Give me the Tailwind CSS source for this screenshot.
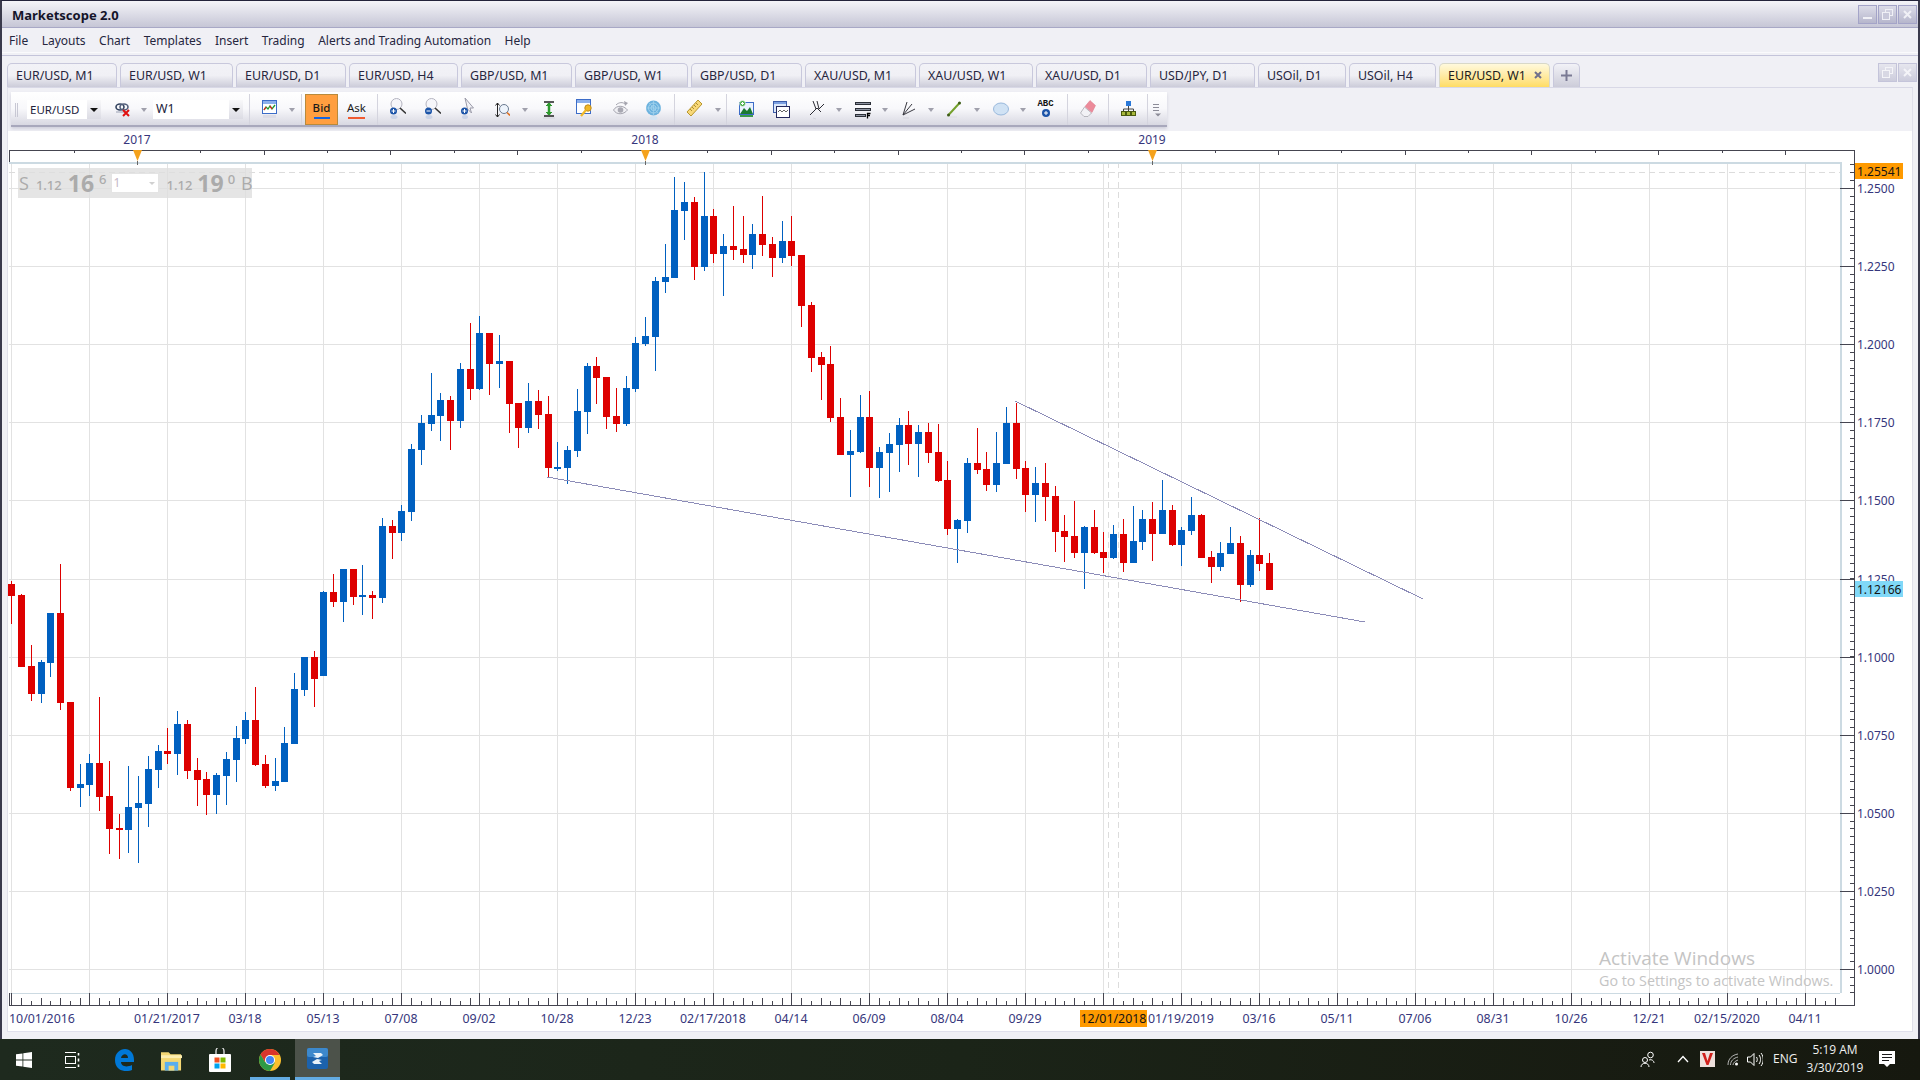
<!DOCTYPE html>
<html lang="en">
<head>
    <meta charset="UTF-8">
    <title>Marketscope 2.0</title>
    <script src="https://cdn.jsdelivr.net/npm/@tailwindcss/browser@4"></script>
</head>
<body class="w-[1920px] h-[1080px] overflow-hidden bg-[#1a2118] font-['Noto_Sans',sans-serif] text-[12px] text-[#22223c]">

    <!-- Application window -->
    <div class="h-[1039px] flex flex-col bg-[#f0f0f5] border-t border-[#23233a] border-l-2 border-l-[#3a3a4c] border-r-2 border-r-[#3a3a4c]">

        <!-- Title bar -->
        <div class="h-[27px] shrink-0 flex items-start bg-gradient-to-b from-[#f4f4f8] to-[#c6c6d6] border-b border-[#a8a8c6]">
            <span class="ml-[10px] mt-[5px] text-[13px] leading-[18px] font-bold text-[#14142a]">Marketscope 2.0</span>
            <div class="ml-auto mt-[4px] mr-[1px] flex gap-[1px]">
                <span class="w-[19px] h-[19px] flex items-end justify-center pb-[4px] bg-gradient-to-b from-[#dcdce8] to-[#b6b6cc] border border-[#a4a4c8]"><span class="w-[9px] h-[2px] bg-[#f0f0f6]"></span></span>
                <span class="w-[19px] h-[19px] flex items-center justify-center bg-gradient-to-b from-[#dcdce8] to-[#b6b6cc] border border-[#a4a4c8]">
                    <svg class="w-[11px] h-[11px]" viewBox="0 0 11 11" fill="none" stroke="#f0f0f6"><rect x="3.5" y="0.5" width="7" height="6"/><rect x="0.5" y="3.5" width="7" height="7" fill="#c8c8da"/></svg>
                </span>
                <span class="w-[19px] h-[19px] flex items-center justify-center bg-gradient-to-b from-[#dcdce8] to-[#b6b6cc] border border-[#a4a4c8]">
                    <svg class="w-[9px] h-[9px]" viewBox="0 0 9 9" stroke="#f0f0f6" stroke-width="2"><path d="M1 1l7 7M8 1l-7 7"/></svg>
                </span>
            </div>
        </div>

        <!-- Menu bar -->
        <div class="h-[25px] shrink-0 flex items-center pl-[7px] pt-[2px] gap-[13.5px] text-[12px] text-[#26263e] bg-[#f0f0f5] border-b border-[#fafafc]">
            <span>File</span>
            <span>Layouts</span>
            <span>Chart</span>
            <span>Templates</span>
            <span>Insert</span>
            <span>Trading</span>
            <span>Alerts and Trading Automation</span>
            <span>Help</span>
        </div>
        <div class="h-[3px] shrink-0 border-b border-[#c4c4da]"></div>

        <!-- Chart tabs -->
        <div class="h-[31px] shrink-0 flex items-end pl-[5px] gap-[3px] text-[12.4px] text-[#26263e]">
            <span class="w-[110px] h-[24px] pl-[8px] leading-[24px] rounded-t-[5px] border border-b-0 border-[#c8c8dc] bg-gradient-to-b from-[#f2f2f7] via-[#f0f0f5] to-[#ccccd9]">EUR/USD, M1</span>
            <span class="w-[113px] h-[24px] pl-[8px] leading-[24px] rounded-t-[5px] border border-b-0 border-[#c8c8dc] bg-gradient-to-b from-[#f2f2f7] via-[#f0f0f5] to-[#ccccd9]">EUR/USD, W1</span>
            <span class="w-[110px] h-[24px] pl-[8px] leading-[24px] rounded-t-[5px] border border-b-0 border-[#c8c8dc] bg-gradient-to-b from-[#f2f2f7] via-[#f0f0f5] to-[#ccccd9]">EUR/USD, D1</span>
            <span class="w-[109px] h-[24px] pl-[8px] leading-[24px] rounded-t-[5px] border border-b-0 border-[#c8c8dc] bg-gradient-to-b from-[#f2f2f7] via-[#f0f0f5] to-[#ccccd9]">EUR/USD, H4</span>
            <span class="w-[111px] h-[24px] pl-[8px] leading-[24px] rounded-t-[5px] border border-b-0 border-[#c8c8dc] bg-gradient-to-b from-[#f2f2f7] via-[#f0f0f5] to-[#ccccd9]">GBP/USD, M1</span>
            <span class="w-[113px] h-[24px] pl-[8px] leading-[24px] rounded-t-[5px] border border-b-0 border-[#c8c8dc] bg-gradient-to-b from-[#f2f2f7] via-[#f0f0f5] to-[#ccccd9]">GBP/USD, W1</span>
            <span class="w-[111px] h-[24px] pl-[8px] leading-[24px] rounded-t-[5px] border border-b-0 border-[#c8c8dc] bg-gradient-to-b from-[#f2f2f7] via-[#f0f0f5] to-[#ccccd9]">GBP/USD, D1</span>
            <span class="w-[111px] h-[24px] pl-[8px] leading-[24px] rounded-t-[5px] border border-b-0 border-[#c8c8dc] bg-gradient-to-b from-[#f2f2f7] via-[#f0f0f5] to-[#ccccd9]">XAU/USD, M1</span>
            <span class="w-[114px] h-[24px] pl-[8px] leading-[24px] rounded-t-[5px] border border-b-0 border-[#c8c8dc] bg-gradient-to-b from-[#f2f2f7] via-[#f0f0f5] to-[#ccccd9]">XAU/USD, W1</span>
            <span class="w-[111px] h-[24px] pl-[8px] leading-[24px] rounded-t-[5px] border border-b-0 border-[#c8c8dc] bg-gradient-to-b from-[#f2f2f7] via-[#f0f0f5] to-[#ccccd9]">XAU/USD, D1</span>
            <span class="w-[105px] h-[24px] pl-[8px] leading-[24px] rounded-t-[5px] border border-b-0 border-[#c8c8dc] bg-gradient-to-b from-[#f2f2f7] via-[#f0f0f5] to-[#ccccd9]">USD/JPY, D1</span>
            <span class="w-[88px] h-[24px] pl-[8px] leading-[24px] rounded-t-[5px] border border-b-0 border-[#c8c8dc] bg-gradient-to-b from-[#f2f2f7] via-[#f0f0f5] to-[#ccccd9]">USOil, D1</span>
            <span class="w-[87px] h-[24px] pl-[8px] leading-[24px] rounded-t-[5px] border border-b-0 border-[#c8c8dc] bg-gradient-to-b from-[#f2f2f7] via-[#f0f0f5] to-[#ccccd9]">USOil, H4</span>
            <span class="w-[111px] h-[24px] pl-[8px] flex items-start justify-between pr-[7px] leading-[24px] rounded-t-[5px] border border-b-0 border-[#d8d8c8] bg-gradient-to-b from-[#fff9dc] to-[#ffdc62] text-[#1c1c1c]">EUR/USD, W1
                <svg class="w-[8px] h-[8px] mt-[7px]" viewBox="0 0 8 8" stroke="#70708c" stroke-width="2"><path d="M1 1l6 6M7 1l-6 6"/></svg>
            </span>
            <span class="w-[27px] h-[24px] flex items-center justify-center rounded-t-[5px] border border-b-0 border-[#c8c8dc] bg-gradient-to-b from-[#f2f2f7] to-[#ccccd9]">
                <svg class="w-[11px] h-[11px]" viewBox="0 0 11 11" stroke="#7a7a94" stroke-width="2"><path d="M5.5 0v11M0 5.5h11"/></svg>
            </span>
            <div class="ml-auto flex gap-[1px] mb-[5px] mr-[1px]">
                <span class="w-[19px] h-[19px] flex items-center justify-center bg-gradient-to-b from-[#e6e6ee] to-[#ccccdc] border border-[#c4c4da]">
                    <svg class="w-[11px] h-[11px]" viewBox="0 0 11 11" fill="none" stroke="#f4f4f8"><rect x="3.5" y="0.5" width="7" height="6"/><rect x="0.5" y="3.5" width="7" height="7" fill="#d8d8e4"/></svg>
                </span>
                <span class="w-[19px] h-[19px] flex items-center justify-center bg-gradient-to-b from-[#e6e6ee] to-[#ccccdc] border border-[#c4c4da]">
                    <svg class="w-[9px] h-[9px]" viewBox="0 0 9 9" stroke="#f4f4f8" stroke-width="2"><path d="M1 1l7 7M8 1l-7 7"/></svg>
                </span>
            </div>
        </div>

        <!-- Content panel -->
        <div class="flex-1 mx-[5px] flex flex-col border-t border-[#d8d8e6] border-x border-x-[#e0e0ea] border-b border-b-[#e0e0ec] mb-[7px]">

            <!-- Toolbar strip -->
            <div class="h-[43px] shrink-0 pt-[4px] pl-[3px]">
                <div class="w-[1156px] h-[35px] flex items-center pt-[2px] bg-gradient-to-b from-[#ffffff] via-[#f8f8fb] to-[#d8d8e2] border-b-2 border-[#a8a8bc] shadow-[0_2px_3px_#d0d0dc]">
                    <!-- grip -->
                    <span class="ml-[4px] w-[4px] h-[14px] bg-[repeating-linear-gradient(90deg,#c8c8d4_0,#c8c8d4_1px,transparent_1px,transparent_2px)]"></span>

                    <span class="ml-[8px] w-[74px] h-[19px] flex items-center bg-white pl-[3px] text-[11.5px]">EUR/USD
                        <span class="ml-auto w-[14px] h-[19px] flex items-center justify-center bg-gradient-to-b from-[#f8f8fa] to-[#dcdce4]"><span class="w-0 h-0 border-x-[4px] border-x-transparent border-t-[4px] border-t-[#111]"></span></span>
                    </span>

                    <!-- link / unlink -->
                    <svg class="ml-[14px] w-[15px] h-[15px] shrink-0" viewBox="0 0 15 15" fill="none"><ellipse cx="5" cy="5" rx="4" ry="3" stroke="#33435f" stroke-width="1.6"/><ellipse cx="9" cy="5" rx="4" ry="3" stroke="#55607c" stroke-width="1.6"/><path d="M1 10h10" stroke="#9aa0b4"/><path d="M8 8l6 6M14 8l-6 6" stroke="#e01010" stroke-width="2"/></svg>
                    <span class="ml-[11px] w-0 h-0 border-x-[3px] border-x-transparent border-t-[4px] border-t-[#a0a0ac]"></span>

                    <span class="ml-[6px] w-[90px] h-[19px] flex items-center bg-white pl-[3px] text-[12.4px]">W1
                        <span class="ml-auto w-[14px] h-[19px] flex items-center justify-center bg-gradient-to-b from-[#f8f8fa] to-[#dcdce4]"><span class="w-0 h-0 border-x-[4px] border-x-transparent border-t-[4px] border-t-[#111]"></span></span>
                    </span>
                    <span class="ml-[6px] w-px h-[31px] bg-[#d4d4de]"></span>

                    <!-- chart type -->
                    <svg class="ml-[12px] w-[15px] h-[20px] shrink-0" viewBox="0 0 15 20"><rect x="0.5" y="0.5" width="14" height="13" fill="#fff" stroke="#3c6cc8"/><rect x="1" y="1" width="13" height="3" fill="#8cb0ec"/><path d="M2 10l2-3 2 2 2-3 2 3 3-4" fill="none" stroke="#1c9a2c" stroke-width="1.3"/><path d="M2 10l2-3" stroke="#e02020" stroke-width="1.3"/><path d="M8 6l2 3" stroke="#e02020" stroke-width="1.3"/><rect x="1" y="15" width="13" height="3" fill="#dcdce6"/></svg>
                    <span class="ml-[12px] w-0 h-0 border-x-[3px] border-x-transparent border-t-[4px] border-t-[#a0a0ac]"></span>
                    <span class="ml-[6px] w-px h-[31px] bg-[#d4d4de]"></span>

                    <!-- bid / ask -->
                    <span class="ml-[3px] w-[33px] h-[31px] flex flex-col items-center justify-center bg-[#ff9f40] border border-[#b88a3c] text-[11.5px] font-medium text-[#1a1a1a] leading-[14px]">Bid<span class="mt-[2px] w-[16px] h-[2px] bg-[#1464e0]"></span></span>
                    <span class="ml-[10px] w-[17px] flex flex-col items-center text-[11.5px] text-[#1a1a1a] leading-[14px]">Ask<span class="mt-[2px] w-[17px] h-[2px] bg-[#f05a30]"></span></span>
                    <span class="ml-[12px] w-px h-[31px] bg-[#d4d4de]"></span>

                    <!-- zoom in -->
                    <svg class="ml-[12px] w-[16px] h-[24px] shrink-0" viewBox="0 0 16 24" fill="none"><circle cx="6.5" cy="6" r="5.5" fill="#f6f6fa" stroke="#b4b4c0"/><path d="M10 10l6 5.5" stroke="#333" stroke-width="1.6"/><circle cx="3.5" cy="13" r="3.5" fill="#1c54a8"/><path d="M1.5 13h4M3.5 11v4" stroke="#fff"/><ellipse cx="4" cy="19" rx="3.5" ry="2" fill="#ccd4e6"/></svg>
                    <!-- zoom out -->
                    <svg class="ml-[19px] w-[16px] h-[24px] shrink-0" viewBox="0 0 16 24" fill="none"><circle cx="6.5" cy="6" r="5.5" fill="#f6f6fa" stroke="#b4b4c0"/><path d="M10 10l6 5.5" stroke="#333" stroke-width="1.6"/><circle cx="3.5" cy="13" r="3.5" fill="#1c54a8"/><path d="M1.5 13h4" stroke="#fff"/><ellipse cx="4" cy="19" rx="3.5" ry="2" fill="#ccd4e6"/></svg>
                    <!-- pointer -->
                    <svg class="ml-[20px] w-[13px] h-[24px] shrink-0" viewBox="0 0 13 24" fill="none"><path d="M4 0l8.5 10-3.5 0 1.5 5-4-4z" fill="#f2f2f6" stroke="#9a9aa8"/><circle cx="3.5" cy="13" r="3.5" fill="#1c54a8"/><path d="M1.5 13h4M3.5 11v4" stroke="#fff"/><ellipse cx="4" cy="19" rx="3" ry="2" fill="#ccd4e6"/></svg>
                    <!-- fit vertical -->
                    <svg class="ml-[21px] w-[15px] h-[22px] shrink-0" viewBox="0 0 15 22" fill="none"><path d="M2.5 4v14M.5 6.5l2-2.5 2 2.5M.5 15.5l2 2.5 2-2.5" stroke="#222"/><circle cx="9" cy="10" r="4.5" fill="#eef4fc" stroke="#6a7a90"/><path d="M12 13.5l3 3" stroke="#e07020" stroke-width="1.6"/><path d="M5 20h9" stroke="#e4e4ea"/></svg>
                    <span class="ml-[12px] w-0 h-0 border-x-[3px] border-x-transparent border-t-[4px] border-t-[#a0a0ac]"></span>
                    <!-- vertical scale -->
                    <svg class="ml-[15px] w-[12px] h-[22px] shrink-0" viewBox="0 0 12 22" fill="none"><path d="M1 3h10M1 17h10" stroke="#222" stroke-width="1.4"/><path d="M6 4v12" stroke="#2e9a2e" stroke-width="2.5"/><path d="M3 7l3-3 3 3M3 13l3 3 3-3" fill="#2e9a2e" stroke="#2e9a2e"/><path d="M0 19h12" stroke="#d4d4dc"/></svg>
                    <!-- window with key -->
                    <svg class="ml-[21px] w-[16px] h-[24px] shrink-0" viewBox="0 0 16 24" fill="none"><rect x="0.5" y="1.5" width="14" height="14" fill="#fff" stroke="#3c6cc8"/><rect x="1" y="2" width="13" height="3" fill="#8cb0ec"/><circle cx="12" cy="10" r="3.2" fill="#f0b828" stroke="#c08a18"/><path d="M10 12l-5 6" stroke="#f0b828" stroke-width="2.2"/></svg>
                    <!-- eye -->
                    <svg class="ml-[21px] w-[15px] h-[22px] shrink-0" viewBox="0 0 15 22" fill="none"><path d="M.5 11c3-5 10-5 14 0-4 5-11 5-14 0z" fill="#f0f0f4" stroke="#a4a4ae"/><circle cx="7.5" cy="11" r="2.8" fill="#a8a8b2"/><path d="M3 6c3-3 7-3 9-1" stroke="#a4a4ae"/><path d="M11 2l4 2-3 3z" fill="#a4a4ae"/><path d="M3 18h9" stroke="#e4e4ea"/></svg>
                    <!-- globe -->
                    <svg class="ml-[18px] w-[15px] h-[22px] shrink-0" viewBox="0 0 15 22" fill="none"><circle cx="7.5" cy="9" r="7.5" fill="#6cb2de"/><circle cx="7.5" cy="9" r="5" stroke="#a4d4ee"/><circle cx="7.5" cy="9" r="2.5" stroke="#a4d4ee"/><path d="M0 9h15M7.5 2v14M3 4l9 10" stroke="#a4d4ee" stroke-width=".7"/><ellipse cx="7.5" cy="19" rx="4" ry="2" fill="#d4e4f2"/></svg>
                    <span class="ml-[13px] w-px h-[31px] bg-[#d4d4de]"></span>

                    <!-- ruler -->
                    <svg class="ml-[11px] w-[16px] h-[20px] shrink-0" viewBox="0 0 16 20" fill="none"><path d="M12 0l4 4L5 16l-4-4z" fill="#f8d878" stroke="#b8962c"/><path d="M10 3l2 2M8 5l2 2M6 7l2 2M4 9l2 2" stroke="#9a7c20" stroke-width=".8"/></svg>
                    <span class="ml-[13px] w-0 h-0 border-x-[3px] border-x-transparent border-t-[4px] border-t-[#a0a0ac]"></span>
                    <span class="ml-[5px] w-px h-[31px] bg-[#d4d4de]"></span>

                    <!-- picture -->
                    <svg class="ml-[12px] w-[15px] h-[20px] shrink-0" viewBox="0 0 15 20" fill="none"><rect x="0.5" y="2.5" width="14" height="12" fill="#eaf2ff" stroke="#3c6cc8"/><path d="M1 14l4-6 3 3 3-4 3 7z" fill="#1c7a30"/><rect x="1" y="15" width="13" height="2" fill="#3a9a4a"/><circle cx="3.5" cy="3.5" r="3" fill="#4cae4c" stroke="#fff" stroke-width=".6"/><path d="M2 3.5h3M3.5 2v3" stroke="#fff"/></svg>
                    <!-- windows -->
                    <svg class="ml-[19px] w-[17px] h-[20px] shrink-0" viewBox="0 0 17 20" fill="none"><rect x="0.5" y="1.5" width="13" height="11" fill="#dce8fa" stroke="#3c5ca8"/><rect x="1" y="2" width="12" height="2" fill="#7ca0e0"/><rect x="3.5" y="6.5" width="13" height="11" fill="#fff" stroke="#24285c"/><path d="M5 12l2-2 2 2 2-2 2 2 2-2" stroke="#666"/></svg>
                    <!-- fork -->
                    <svg class="ml-[20px] w-[15px] h-[20px] shrink-0" viewBox="0 0 15 20" fill="none" stroke="#2c2c34"><path d="M0 15l7-7"/><path d="M3 1l3 8M7 1l2 8 5-5M7 8l4 4"/><path d="M3 18l3 1" stroke="#d4d4dc"/></svg>
                    <span class="ml-[11px] w-0 h-0 border-x-[3px] border-x-transparent border-t-[4px] border-t-[#a0a0ac]"></span>
                    <!-- level list -->
                    <svg class="ml-[13px] w-[16px] h-[20px] shrink-0" viewBox="0 0 16 20" fill="none"><rect x="0.5" y="2.5" width="15" height="2" fill="#8c92a0" stroke="#2c3038"/><rect x="0.5" y="8.5" width="15" height="2" fill="#8c92a0" stroke="#2c3038"/><rect x="0.5" y="14.5" width="10" height="2" fill="#8c92a0" stroke="#2c3038"/><path d="M12.5 13v5.500M12 13.5h3.5M12 15.5h3" stroke="#000" stroke-width="1.3"/></svg>
                    <span class="ml-[11px] w-0 h-0 border-x-[3px] border-x-transparent border-t-[4px] border-t-[#a0a0ac]"></span>
                    <!-- fan -->
                    <svg class="ml-[14px] w-[13px] h-[20px] shrink-0" viewBox="0 0 13 20" fill="none" stroke="#383840"><path d="M1 15L5 2M1 15L10 4M1 15L13 9"/><path d="M1 18h6" stroke="#d4d4dc"/></svg>
                    <span class="ml-[13px] w-0 h-0 border-x-[3px] border-x-transparent border-t-[4px] border-t-[#a0a0ac]"></span>
                    <!-- trend line -->
                    <svg class="ml-[13px] w-[14px] h-[20px] shrink-0" viewBox="0 0 14 20" fill="none"><path d="M1.5 15L12.5 3" stroke="#74a02c" stroke-width="2"/><circle cx="1.5" cy="15" r="1.5" fill="#3e5c18"/><circle cx="12.5" cy="3" r="1.5" fill="#3e5c18"/><path d="M3 17h7" stroke="#dcdce2"/></svg>
                    <span class="ml-[13px] w-0 h-0 border-x-[3px] border-x-transparent border-t-[4px] border-t-[#a0a0ac]"></span>
                    <!-- ellipse -->
                    <svg class="ml-[13px] w-[16px] h-[20px] shrink-0" viewBox="0 0 16 20"><ellipse cx="8" cy="9" rx="7.5" ry="6" fill="#d0e2f4" stroke="#98b8dc"/></svg>
                    <span class="ml-[11px] w-0 h-0 border-x-[3px] border-x-transparent border-t-[4px] border-t-[#a0a0ac]"></span>
                    <!-- text annotation -->
                    <span class="ml-[12px] w-[15px] h-[20px] shrink-0 flex flex-col items-center font-['Liberation_Mono',monospace] font-bold text-[9px] leading-[9px] text-[#111]">ABC
                        <svg class="w-[8px] h-[9px]" viewBox="0 0 8 9"><circle cx="4" cy="4" r="4" fill="#1c54a8"/><path d="M2 4h4M4 2v4" stroke="#fff"/></svg>
                    </span>
                    <span class="ml-[14px] w-px h-[31px] bg-[#d4d4de]"></span>

                    <!-- eraser -->
                    <svg class="ml-[12px] w-[16px] h-[20px] shrink-0" viewBox="0 0 16 20"><path d="M4.500 7l7 6-3.500 3.500H4L.5 13z" fill="#f2f2f6" stroke="#a8a8b0" stroke-width=".8"/><path d="M10 .5l5.500 5L12 12.500 5 6.500z" fill="#ec8a9a" stroke="#d87888" stroke-width=".5"/></svg>
                    <span class="ml-[12px] w-px h-[31px] bg-[#d4d4de]"></span>

                    <!-- hierarchy -->
                    <svg class="ml-[12px] w-[15px] h-[20px] shrink-0" viewBox="0 0 15 20" fill="none"><rect x="5" y="1" width="5" height="5" fill="#2a78d8"/><path d="M7.5 6v3M2.5 11V9h10v2M7.5 9v2" stroke="#444"/><rect x="0.5" y="11.5" width="4" height="4" fill="#a8b83c" stroke="#4c5c10"/><rect x="5.5" y="11.5" width="4" height="4" fill="#a8b83c" stroke="#4c5c10"/><rect x="10.5" y="11.5" width="4" height="4" fill="#a8b83c" stroke="#4c5c10"/></svg>
                    <span class="ml-[11px] w-px h-[31px] bg-[#d4d4de]"></span>

                    <!-- more -->
                    <svg class="ml-[5px] w-[8px] h-[14px] shrink-0" viewBox="0 0 8 14" fill="none"><path d="M0 1.5h6M0 4.5h6M0 7.5h6" stroke="#8c8c98"/><path d="M2 10.5h6L5 13.5z" fill="#8c8c98"/></svg>
                </div>
            </div>

            <!-- Chart -->
            <div class="relative h-[900px] shrink-0 bg-white">
                <svg id="chart" class="block w-[1904px] h-[900px]" viewBox="8 131 1904 900" xmlns="http://www.w3.org/2000/svg"></svg>

                <!-- one click trading panel -->
                <div class="absolute left-[10px] top-[37px] w-[234px] h-[30px] flex items-center bg-[#dedede]/80 text-[#ababab]">
                    <span class="ml-[1px] shrink-0 text-[18px] font-['Open_Sans',sans-serif]">S</span>
                    <span class="ml-[7px] mt-[6px] shrink-0 text-[13px] font-medium">1.12</span>
                    <span class="ml-[6px] shrink-0 text-[23px] leading-none font-bold">16</span>
                    <span class="ml-[5px] mb-[6px] shrink-0 text-[13px] font-medium">6</span>
                    <span class="ml-[5px] w-[48px] h-[20px] shrink-0 flex items-center justify-between px-[1px] bg-white border border-[#e4e4e4] text-[12px] text-[#c4b8c8]">1<span class="mr-[2px] w-0 h-0 border-x-[3px] border-x-transparent border-t-[3px] border-t-[#d0d0d0]"></span></span>
                    <span class="ml-[7px] mt-[6px] shrink-0 text-[13px] font-medium">1.12</span>
                    <span class="ml-[5px] shrink-0 text-[23px] leading-none font-bold">19</span>
                    <span class="ml-[4px] mb-[6px] shrink-0 text-[13px] font-medium">0</span>
                    <span class="ml-[6px] shrink-0 text-[18px] font-['Open_Sans',sans-serif]">B</span>
                </div>

                <!-- Windows watermark -->
                <div class="absolute left-[1591px] top-[814px] font-['Open_Sans',sans-serif] text-[#c4c4c4] pointer-events-none">
                    <div class="text-[19px] leading-[26px]">Activate Windows</div>
                    <div class="text-[14.3px] leading-[18px] mt-[1px]">Go to Settings to activate Windows.</div>
                </div>
            </div>
        </div>
    </div>

    <!-- Taskbar -->
    <div class="h-[41px] flex items-center relative bg-gradient-to-r from-[#1e2a1e] via-[#1b2418] to-[#16180f] text-[#f0f0f0] font-['Open_Sans',sans-serif]">
        <!-- start -->
        <svg class="ml-[16px] w-[16px] h-[16px] shrink-0" viewBox="0 0 16 16" fill="#fff"><path d="M0 2.3l6.5-.9v6.2H0zM7.3 1.3L16 0v7.6H7.3zM0 8.4h6.5v6.2L0 13.7zM7.3 8.4H16V16l-8.7-1.3z"/></svg>
        <!-- task view -->
        <svg class="ml-[33px] w-[15px] h-[16px] shrink-0" viewBox="0 0 15 16" fill="none" stroke="#fff"><path d="M0 .5h11M0 15.5h11"/><rect x="0.5" y="4.5" width="10" height="7"/><path d="M13.5 1v2.5M13.5 6.5v3M13.5 12.5V15" stroke-width="1.6"/></svg>
        <!-- edge -->
        <svg class="ml-[34px] w-[20px] h-[22px] shrink-0" viewBox="0 0 20 22"><path d="M1 11C1 4 6 0 11 0c5 0 9 4 9 11v2H7c0 4 5 6 11 3v5c-8 3-17 0-17-10zM7 9h7c0-5-6-5-7 0z" fill="#0078d7"/></svg>
        <!-- explorer -->
        <svg class="ml-[27px] w-[21px] h-[22px] shrink-0" viewBox="0 0 22 22"><path d="M0 3h8l2 2h11v17H0z" fill="#f4d774"/><rect x="0" y="6" width="22" height="3" fill="#fdeeb0"/><rect x="4" y="13" width="14" height="9" fill="#5aaef0"/><rect x="8" y="17" width="6" height="5" fill="#f4d774"/></svg>
        <!-- store -->
        <svg class="ml-[27px] w-[22px] h-[24px] shrink-0" viewBox="0 0 22 24" fill="none"><path d="M7 6V3a4 4 0 0 1 8 0v3" stroke="#d8d8d8" stroke-width="1.4"/><rect x="0" y="6" width="22" height="18" rx="1" fill="#fff"/><rect x="5.5" y="9.5" width="5" height="5" fill="#f25022"/><rect x="11.5" y="9.5" width="5" height="5" fill="#7fba00"/><rect x="5.5" y="15.5" width="5" height="5" fill="#00a4ef"/><rect x="11.5" y="15.5" width="5" height="5" fill="#ffb900"/></svg>
        <!-- chrome -->
        <svg class="ml-[28px] w-[22px] h-[22px] shrink-0" viewBox="0 0 22 22"><circle cx="11" cy="11" r="11" fill="#fbc02d"/><path d="M11 0a11 11 0 0 0-9.5 5.5L6 13l5-7h9.5A11 11 0 0 0 11 0z" fill="#d9362c"/><path d="M1.5 5.5A11 11 0 0 0 11 22l5-8.500-10-.5z" fill="#2e9a46"/><circle cx="11" cy="11" r="5" fill="#fff"/><circle cx="11" cy="11" r="4" fill="#4285f4"/></svg>
        <!-- marketscope, running -->
        <span class="ml-[14px] w-[45px] h-[41px] flex items-center justify-center bg-[#4c524a] border-b-[3px] border-[#63abe2]">
            <svg class="w-[21px] h-[21px]" viewBox="0 0 21 21"><rect width="21" height="21" rx="2" fill="#1c62ac"/><rect width="21" height="9" rx="2" fill="#3c88cc"/><path d="M6 5h8l2 2-5 3-5-1 3-1zM15 16H7l-2-2 5-3 5 1-3 1z" fill="#e8f2fa"/></svg>
        </span>
        <span class="absolute left-[250px] bottom-0 w-[40px] h-[3px] bg-[#63abe2]"></span>

        <!-- tray -->
        <svg class="absolute left-[1640px] top-[12px] w-[15px] h-[17px]" viewBox="0 0 15 17" fill="none" stroke="#fff"><circle cx="5" cy="9" r="2.5"/><path d="M1 16c0-5 8-5 8 0"/><circle cx="10.5" cy="4" r="2.8"/><path d="M9 9c3-1 5 1 5 3"/></svg>
        <svg class="absolute left-[1677px] top-[16px] w-[12px] h-[8px]" viewBox="0 0 12 8" fill="none" stroke="#fff" stroke-width="1.3"><path d="M1 7l5-5.5L11 7"/></svg>
        <svg class="absolute left-[1700px] top-[12px] w-[15px] h-[16px]" viewBox="0 0 15 16"><rect width="15" height="16" fill="#eee0dc"/><path d="M2 2h3l2.5 8L10 2h3L8.5 14h-2z" fill="#d0201c"/></svg>
        <svg class="absolute left-[1727px] top-[14px] w-[12px] h-[13px]" viewBox="0 0 12 13" fill="none" stroke="#b8b8b8"><path d="M1 12c0-6 4-10 10-11M3.5 12c0-4 3-7 7.5-8M6 12c0-2 2-4 5-5"/><circle cx="9.5" cy="11" r="1.5" fill="#fff" stroke="none"/></svg>
        <svg class="absolute left-[1747px] top-[13px] w-[16px] h-[15px]" viewBox="0 0 16 15" fill="none" stroke="#fff"><path d="M.5 5h3L7 1.5v12L3.5 10h-3z"/><path d="M9.5 5c1 1.5 1 3.5 0 5M12 3c2 2.5 2 6.5 0 9M14 1c3 4 3 9 0 13"/></svg>
        <span class="absolute left-[1773px] top-[12px] text-[12px] leading-[16px]">ENG</span>
        <div class="absolute left-[1806px] top-[2px] w-[58px] text-center text-[12px] leading-[18px]">
            <div>5:19 AM</div>
            <div>3/30/2019</div>
        </div>
        <svg class="absolute left-[1879px] top-[12px] w-[16px] h-[17px]" viewBox="0 0 16 17"><path d="M0 0h16v13h-5l-3 3-3-3H0z" fill="#fff"/><path d="M3 3.5h10M3 6.5h10M3 9.5h7" stroke="#1a1a1a"/></svg>
    </div>

    <script>
        // chart is drawn in page coordinates, so the numbers read straight off the screen
        const RED = '#dd0000', BLUE = '#0060c0', GRID = '#e2e2e2', AXIS = '#454550', LABEL = '#36367c';
        const PLOT = { left: 9, right: 1840, top: 162, bottom: 993 };
        let out = '';

        const bar = (x, y, w, h, fill) => {
            out += `<rect x="${x}" y="${y}" width="${w}" height="${h}" fill="${fill}" shape-rendering="crispEdges"/>`;
        };
        const label = (x, y, str, anchor = 'start', fill = LABEL, size = 12) => {
            out += `<text x="${x}" y="${y}" text-anchor="${anchor}" fill="${fill}" font-size="${size}" dominant-baseline="central">${str}</text>`;
        };

        // grid
        for (let x = 89; x < PLOT.right; x += 78) bar(x, PLOT.top, 1, PLOT.bottom - PLOT.top, GRID);
        bar(11, PLOT.top, 1, PLOT.bottom - PLOT.top, GRID);
        for (let k = 0; k <= 10; k++) bar(PLOT.left, Math.round(188 + 78.1 * k), PLOT.right - PLOT.left, 1, GRID);

        // dashed marker lines
        out += `<path d="M${PLOT.left} 172H${PLOT.right}" stroke="#dcdcdc" stroke-dasharray="6 4" shape-rendering="crispEdges"/>`;
        out += `<path d="M1108.5 162V993M1118.5 162V993" stroke="#dcdcdc" stroke-dasharray="6 4" shape-rendering="crispEdges"/>`;

        // candles as [colour, high, body top, body bottom, low], read at 3x from the screen
        const candleRows = [
            [550, 'r',93,102,138,222, 'r',132,135,351,351, 'r',285,348,432,453, 'b',330,336,432,459, 'b',189,189,339,381, 'r',42,189,459,480,
                  'r',456,456,714,723, 'b',642,702,714,771, 'b',612,639,705,738, 'r',441,639,741,783, 'r',633,738,837,912, 'r',792,834,840,927,
                  'b',648,771,840,909, 'b',678,759,774,939, 'b',618,657,762,831, 'b',585,603,660,714, 'r',534,603,612,642, 'b',483,522,612,675,
                  'r',510,522,663,687, 'r',624,660,690,768, 'r',666,687,735,795, 'b',669,675,735,792, 'b',606,627,678,765, 'b',528,564,630,696,
                  'b',486,510,567,582, 'r',411,510,645,648, 'r',615,642,708,714, 'b',624,693,708,723, 'b',531,579,696,696, 'b',369,417,582,582,
                  'b',321,321,420,438, 'r',303,321,387,471],
            [300, 'b',873,876,1128,1128, 'r',822,876,906,921, 'b',807,807,906,966, 'r',807,807,891,915, 'b',795,885,891,945, 'r',873,885,894,957,
                  'b',654,678,894,909, 'r',660,678,699,777, 'b',615,633,699,723, 'b',432,447,636,663, 'b',345,369,450,495, 'b',219,345,372,393,
                  'b',279,300,348,423, 'r',288,300,363,450, 'b',189,207,363,384, 'r',69,207,267,300, 'b',48,99,267,270, 'r',99,99,192,285,
                  'b',105,183,192,264, 'r',183,183,312,399, 'r',309,309,384,444, 'b',249,303,384,399, 'r',270,303,345,387, 'r',288,342,504,531,
                  'b',426,501,504,513, 'b',438,450,504,552, 'b',267,333,453,471, 'b',189,198,336,402, 'r',171,198,234,312, 'r',231,231,351,387,
                  'r',264,348,372,396],
            [160, 'b',648,684,792,798, 'b',531,549,687,696, 'b',471,528,552,558, 'b',351,363,531,633, 'b',252,351,366,399, 'b',51,150,354,354,
                  'b',66,126,153,240, 'r',111,126,321,360, 'b',36,168,321,333, 'r',147,168,282,309, 'b',222,258,282,408, 'r',138,258,270,300,
                  'r',168,267,285,309, 'b',192,222,285,327, 'r',108,222,255,288, 'r',231,252,294,351, 'b',183,243,294,309, 'r',168,243,288,318,
                  'r',285,285,438,501, 'r',426,435,594,636, 'r',576,591,615,720, 'r',558,612,774,786, 'r',714,771,885,885, 'b',810,873,885,1011,
                  'b',705,771,876,879, 'r',693,771,924,981, 'b',861,876,924,1014, 'b',819,852,879,996, 'b',774,795,855,936, 'r',753,795,852,915,
                  'b',795,816,852,951, 'r',789,816,879,909, 'r',792,876,963,966],
            [390, 'r',213,270,417,435, 'b',387,390,417,519, 'b',204,219,393,429, 'r',114,219,240,252, 'r',186,237,285,303, 'b',126,219,285,306,
                  'b',51,99,222,222, 'r',39,99,237,267, 'r',213,234,315,366, 'b',231,279,315,396, 'r',219,279,321,393, 'r',288,318,426,486,
                  'r',375,423,441,516, 'r',333,438,489,504, 'b',408,411,489,597, 'r',360,411,489,492, 'r',426,486,504,549, 'b',405,432,504,507,
                  'r',387,432,519,546, 'b',348,453,519,519, 'b',360,387,456,480, 'r',336,387,432,513, 'b',270,360,432,432, 'r',345,360,465,468,
                  'b',411,420,465,528, 'b',321,375,423,435, 'r',372,375,504,504, 'r',483,501,531,579, 'b',456,489,531,543, 'b',411,459,492,492,
                  'r',438,459,585,636, 'b',480,495,585,591, 'r',384,495,522,543, 'r',489,519,600,600],
        ];

        let index = 0;
        candleRows.forEach(([base, ...cells]) => {
            for (let c = 0; c < cells.length; c += 5, index++) {
                const colour = cells[c] === 'r' ? RED : BLUE;
                const [high, open, close, low] = cells.slice(c + 1, c + 5).map(v => Math.round(base + v / 3));
                const x = Math.round(11.3 + 9.75 * index);
                bar(x, high, 1, low - high, colour);
                bar(x - 3, open, 7, Math.max(close - open, 2), colour);
            }
        });

        // trend lines
        out += `<line x1="547" y1="477" x2="1365" y2="622" stroke="#8c8cb8" shape-rendering="crispEdges"/>`;
        out += `<line x1="1015" y1="401" x2="1423" y2="599" stroke="#8c8cb8" shape-rendering="crispEdges"/>`;

        // plot frame
        bar(PLOT.left, PLOT.top, PLOT.right - PLOT.left, 2, '#ccdae2');
        bar(PLOT.left, PLOT.bottom, PLOT.right - PLOT.left, 1, '#ccdae2');
        bar(PLOT.right, PLOT.top, 2, PLOT.bottom - PLOT.top, '#ccdae2');

        // top time ruler
        bar(PLOT.left, 150, 1855 - PLOT.left, 1, AXIS);
        bar(PLOT.left, 150, 1, 12, AXIS);
        for (let k = 0; k < 28; k++) {
            const x = Math.round(73.5 + 63.39 * k);
            bar(x, 150, 1, x === 1659 || x === 1660 ? 15 : k % 2 ? 5 : 3, AXIS);
        }
        [[137, '2017'], [645, '2018'], [1152, '2019']].forEach(([x, year]) => {
            label(x, 139, year, 'middle');
            out += `<path d="M${x - 4} 150h9l-4.5 11z" fill="#f5a21c"/>`;
            bar(x, 161, 1, 4, '#666');
        });

        // right price axis
        bar(1854, 150, 1, 856, AXIS);
        for (let y = 164.47; y < 1000; y += 7.81) bar(1850, Math.round(y), 5, 1, AXIS);
        ['1.2500', '1.2250', '1.2000', '1.1750', '1.1500', '1.1250', '1.1000', '1.0750', '1.0500', '1.0250', '1.0000'].forEach((price, k) => {
            const y = Math.round(188 + 78.1 * k);
            bar(1840, y, 15, 1, AXIS);
            label(1857, y, price);
        });
        bar(1855, 163, 48, 16, '#ff9a00');
        label(1857, 171, '1.25541', 'start', '#141414');
        bar(1855, 581, 48, 16, '#80d8f8');
        label(1857, 589, '1.12166', 'start', '#141414');

        // bottom time ruler
        bar(PLOT.left, 1005, 1855 - PLOT.left, 1, AXIS);
        bar(PLOT.left, PLOT.bottom, 1, 12, AXIS);
        for (let i = 0; i < 188; i++) {
            const x = Math.round(11.3 + 9.75 * i);
            if (x < 1850) bar(x, i % 8 === 0 ? 993 : i % 2 ? 998 : 1001, 1, i % 8 === 0 ? 12 : i % 2 ? 7 : 4, AXIS);
        }
        label(PLOT.left, 1018, '10/01/2016', 'start', LABEL, 12.4);
        ['01/21/2017', '03/18', '05/13', '07/08', '09/02', '10/28', '12/23', '02/17/2018', '04/14', '06/09', '08/04', '09/29', '', '01/19/2019', '03/16', '05/11', '07/06', '08/31', '10/26', '12/21', '02/15/2020', '04/11']
            .forEach((date, k) => label(167 + 78 * k, 1018, date, 'middle', LABEL, 12.4));
        bar(1080, 1010, 67, 17, '#ff9a00');
        label(1113.5, 1018, '12/01/2018', 'middle', '#141414', 12.4);

        document.getElementById('chart').innerHTML = out;
    </script>
</body>
</html>
